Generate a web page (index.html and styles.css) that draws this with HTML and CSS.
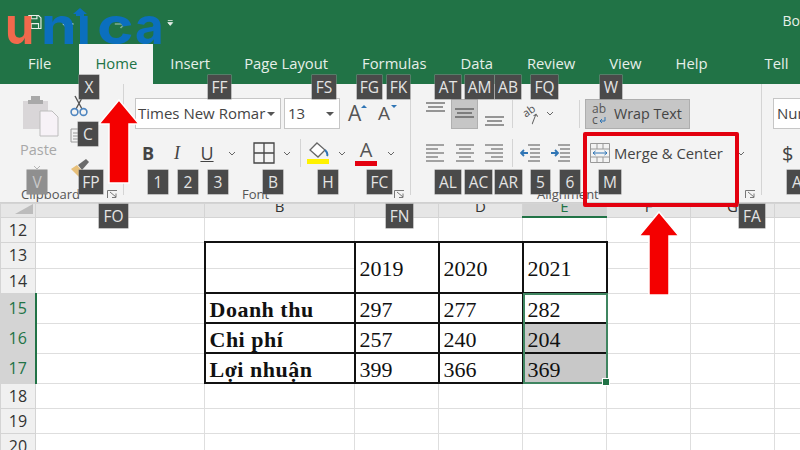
FILE: index.html
```html
<!DOCTYPE html>
<html lang="en">
<head>
<meta charset="utf-8">
<title>Excel ribbon</title>
<link rel="stylesheet" href="styles.css">
</head>
<body>
<div class="app">
  <header class="titlebar">
    <div class="qat">
      <svg class="qat-save" width="17" height="18" viewBox="0 0 17 18"><path d="M1 1h12l3 3v13H1z M4 17v-6h9v6 M4 1v4h7V1" fill="none" stroke="#e8efe9" stroke-width="1.4"/></svg>
      <svg class="qat-undo" width="15" height="12" viewBox="0 0 15 12"><path d="M14 6H3 M7 1L2 6l5 5" fill="none" stroke="#fff" stroke-width="2"/></svg>
      <svg class="qat-redo" width="15" height="12" viewBox="0 0 15 12"><path d="M1 6h11 M8 1l5 5-5 5" fill="none" stroke="#7fae93" stroke-width="2"/></svg>
      <svg class="qat-more" width="8" height="8" viewBox="0 0 8 8"><path d="M1 1h6 M1 3.5h6L4 7z" fill="#e8efe9" stroke="#e8efe9"/></svg>
      <span class="doc-name">Bo</span>
    </div>
    <nav class="tabs">
      <span class="tab tab-file">File</span>
      <span class="tab tab-home">Home</span>
      <span class="tab">Insert</span>
      <span class="tab">Page Layout</span>
      <span class="tab">Formulas</span>
      <span class="tab">Data</span>
      <span class="tab">Review</span>
      <span class="tab">View</span>
      <span class="tab">Help</span>
      <svg class="bulb" width="16" height="22" viewBox="0 0 16 22"><path d="M5 15c0-3-4-4-4-8a7 7 0 0 1 14 0c0 4-4 5-4 8z M5 18h6 M6 21h4" fill="none" stroke="#eef4f0" stroke-width="1.4"/></svg>
      <span class="tab tab-tell">Tell</span>
    </nav>
  </header>

  <section class="ribbon">
    <div class="group group-clip">
      <div class="clip-body">
        <div class="paste">
          <svg width="37" height="42" viewBox="0 0 37 42"><path d="M1 6h25v28H1z" fill="#d9d6d8"/><path d="M9 5V1h9v4h3v4H6V5z" fill="#a9a9a9"/><path d="M18 16h12l6 6v19H18z" fill="#f7f2f7" stroke="#bdbdbd"/></svg>
          <span class="paste-label">Paste</span>
          <svg class="chev-paste" width="8" height="5" viewBox="0 0 8 5"><path d="M1 1l3 3 3-3" fill="none" stroke="#b5b5b5"/></svg>
        </div>
        <div class="clip-tools">
          <svg width="18" height="22" viewBox="0 0 18 22"><path d="M5 1l7 13 M13 1L6 14" stroke="#555" stroke-width="1.4" fill="none"/><circle cx="4.5" cy="17" r="3.4" fill="none" stroke="#4f86c0" stroke-width="1.6"/><circle cx="13.5" cy="17" r="3.4" fill="none" stroke="#4f86c0" stroke-width="1.6"/></svg>
          <svg class="tool-copy" width="18" height="15" viewBox="0 0 18 15"><path d="M1 1h7l2 2v11H1z M3 5h5 M3 8h5 M3 11h5" fill="none" stroke="#9a9a9a"/></svg>
          <svg class="tool-brush" width="20" height="20" viewBox="0 0 20 20"><path d="M1 11l6-4 6 7-4 5z" fill="#e8c07a"/><path d="M8 7l8-6 3 3-7 8z" fill="#6b6b6b"/></svg>
        </div>
      </div>
      <div class="group-label label-clip">Clipboard</div>
      <svg class="launcher" width="11" height="9" viewBox="0 0 11 9"><path d="M.5 8V.5H10 M3 2l6 5 M9 3.5V7.500H5" fill="none" stroke="#777"/></svg>
    </div>

    <div class="group group-font">
      <div class="row row-top">
        <div class="select select-font">Times New Romar<i class="caret"></i></div>
        <div class="select select-size">13<i class="caret"></i></div>
        <span class="grow">A<i class="up"></i></span>
        <span class="shrink">A<i class="down"></i></span>
      </div>
      <div class="row row-bottom">
        <b class="fmt fmt-b">B</b>
        <i class="fmt fmt-i">I</i>
        <u class="fmt fmt-u">U</u>
        <svg class="chev ch-u" width="8" height="5" viewBox="0 0 8 5"><path d="M1 1l3 3 3-3" fill="none" stroke="#666"/></svg>
        <svg class="borders" width="22" height="22" viewBox="0 0 22 22"><path d="M1 1h20v20H1z M11 1v20 M1 11h20" fill="none" stroke="#444" stroke-width="1.300"/></svg>
        <svg class="chev ch-b" width="8" height="5" viewBox="0 0 8 5"><path d="M1 1l3 3 3-3" fill="none" stroke="#666"/></svg>
        <span class="vsep s-font"></span>
        <span class="fill">
          <svg width="22" height="16" viewBox="0 0 22 16"><path d="M10 1l8 7-7 7-8-7z" fill="#fff" stroke="#666" stroke-width="1.300"/><path d="M18 8c2 2 3 4 2 6" fill="none" stroke="#2f75b5" stroke-width="2"/></svg>
          <i class="swatch swatch-yellow"></i>
        </span>
        <svg class="chev ch-f" width="8" height="5" viewBox="0 0 8 5"><path d="M1 1l3 3 3-3" fill="none" stroke="#666"/></svg>
        <span class="color-a">A<i class="swatch swatch-red"></i></span>
        <svg class="chev ch-a" width="8" height="5" viewBox="0 0 8 5"><path d="M1 1l3 3 3-3" fill="none" stroke="#666"/></svg>
      </div>
      <div class="group-label label-font">Font</div>
      <svg class="launcher" width="11" height="9" viewBox="0 0 11 9"><path d="M.5 8V.5H10 M3 2l6 5 M9 3.5V7.500H5" fill="none" stroke="#777"/></svg>
    </div>

    <div class="group group-align">
      <div class="row row-top">
        <span class="al-btn al-first"><svg width="19" height="11" viewBox="0 0 19 11"><path d="M0 1h19 M2 5h15 M0 9h19" stroke="#777" stroke-width="1.300"/></svg></span>
        <span class="al-btn al-active"><svg width="19" height="11" viewBox="0 0 19 11"><path d="M0 1h19 M2 5h15 M0 9h19" stroke="#666" stroke-width="1.300"/></svg></span>
        <span class="al-btn al-low"><svg width="19" height="11" viewBox="0 0 19 11"><path d="M0 1h19 M2 5h15 M0 9h19" stroke="#777" stroke-width="1.300"/></svg></span>
        <span class="vsep s-a1"></span>
        <span class="orient">ab<svg class="orient-line" width="10" height="8" viewBox="0 0 10 8"><path d="M0 7L9 1 M6 1h3v3" fill="none" stroke="#666"/></svg></span>
        <svg class="chev ch-o" width="8" height="5" viewBox="0 0 8 5"><path d="M1 1l3 3 3-3" fill="none" stroke="#666"/></svg>
        <span class="vsep s-a2"></span>
        <div class="wrap-btn">
          <span class="wrap-ico">ab<br>c<svg width="8" height="7" viewBox="0 0 8 7"><path d="M7 0v4H2 M4 2L2 4l2 2" fill="none" stroke="#2f75b5"/></svg></span>
          <span class="wrap-text">Wrap Text</span>
        </div>
      </div>
      <div class="row row-bottom">
        <svg class="para p-first" width="18" height="20" viewBox="0 0 18 20"><path d="M0 2h18 M0 6h12 M0 10h18 M0 14h12 M0 18h18" stroke="#888" stroke-width="1.300"/></svg>
        <svg class="para p-gap" width="18" height="20" viewBox="0 0 18 20"><path d="M0 2h18 M3 6h12 M0 10h18 M3 14h12 M0 18h18" stroke="#888" stroke-width="1.300"/></svg>
        <svg class="para p-gap2" width="18" height="20" viewBox="0 0 18 20"><path d="M0 2h18 M6 6h12 M0 10h18 M6 14h12 M0 18h18" stroke="#888" stroke-width="1.300"/></svg>
        <span class="vsep s-a3"></span>
        <svg class="indent" width="20" height="20" viewBox="0 0 20 20"><path d="M8 2h12 M10 6h10 M10 10h10 M10 14h10 M8 18h12" stroke="#888" stroke-width="1.300"/><path d="M8 10H1 M4 7l-3 3 3 3" fill="none" stroke="#2f75b5" stroke-width="1.800"/></svg>
        <svg class="indent i-gap" width="20" height="20" viewBox="0 0 20 20"><path d="M8 2h12 M10 6h10 M10 10h10 M10 14h10 M8 18h12" stroke="#888" stroke-width="1.300"/><path d="M1 10h7 M5 7l3 3-3 3" fill="none" stroke="#2f75b5" stroke-width="1.800"/></svg>
        <svg class="merge-ico" width="20" height="20" viewBox="0 0 20 20"><path d="M.5.5h19v19H.5z M.5 6h19 M.5 14h19 M7 .5V6 M13 .5V6 M7 14v5.500 M13 14v5.500" fill="none" stroke="#999"/><path d="M3 10h14 M5.500 8L3 10l2.500 2 M14.500 8L17 10l-2.500 2" fill="none" stroke="#2f75b5"/></svg>
        <span class="merge-text">Merge &amp; Center</span>
        <svg class="chev ch-m" width="8" height="5" viewBox="0 0 8 5"><path d="M1 1l3 3 3-3" fill="none" stroke="#666"/></svg>
      </div>
      <div class="group-label label-align">Alignment</div>
      <svg class="launcher" width="11" height="9" viewBox="0 0 11 9"><path d="M.5 8V.5H10 M3 2l6 5 M9 3.5V7.500H5" fill="none" stroke="#777"/></svg>
    </div>

    <div class="group group-num">
      <div class="row row-top"><div class="select select-num">Num</div></div>
      <div class="row row-bottom"><span class="dollar">$</span></div>
    </div>
  </section>

  <main class="sheet">
    <table class="grid">
      <colgroup>
        <col class="col-head"><col class="col-a"><col class="col-b"><col class="col-n"><col class="col-n"><col class="col-n"><col class="col-n"><col class="col-n"><col class="col-n">
      </colgroup>
      <thead>
        <tr class="r-cols">
          <th class="corner"><svg width="18" height="10" viewBox="0 0 18 10"><path d="M18 0v10H0z" fill="#bcbcbc"/></svg></th>
          <th><div class="col-letter">A</div></th><th><div class="col-letter">B</div></th><th><div class="col-letter">C</div></th><th><div class="col-letter">D</div></th>
          <th class="col-sel"><div class="col-letter">E</div></th><th><div class="col-letter">F</div></th><th><div class="col-letter">G</div></th><th><div class="col-letter">H</div></th>
        </tr>
      </thead>
      <tbody>
        <tr class="r-top"><th>12</th><td></td><td></td><td></td><td></td><td></td><td></td><td></td><td></td></tr>
        <tr class="r-26"><th>13</th><td></td><td class="box box-nobottom"></td><td class="box" rowspan="2">2019</td><td class="box" rowspan="2">2020</td><td class="box" rowspan="2">2021</td><td></td><td></td><td></td></tr>
        <tr class="r-25"><th>14</th><td></td><td class="box box-notop"></td><td></td><td></td><td></td></tr>
        <tr class="r-30"><th class="row-sel">15</th><td></td><td class="box label">Doanh thu</td><td class="box">297</td><td class="box">277</td><td class="box">282</td><td></td><td></td><td></td></tr>
        <tr class="r-30"><th class="row-sel">16</th><td></td><td class="box label">Chi phí</td><td class="box">257</td><td class="box">240</td><td class="box shaded">204</td><td></td><td></td><td></td></tr>
        <tr class="r-30"><th class="row-sel">17</th><td></td><td class="box label">Lợi nhuận</td><td class="box">399</td><td class="box">366</td><td class="box shaded">369</td><td></td><td></td><td></td></tr>
        <tr class="r-25"><th>18</th><td></td><td></td><td></td><td></td><td></td><td></td><td></td><td></td></tr>
        <tr class="r-25"><th>19</th><td></td><td></td><td></td><td></td><td></td><td></td><td></td><td></td></tr>
        <tr class="r-25"><th>20</th><td></td><td></td><td></td><td></td><td></td><td></td><td></td><td></td></tr>
      </tbody>
    </table>
    <div class="selection"><i class="handle"></i></div>
  </main>

  <div class="logo"><span class="logo-u">u</span><span class="logo-blue l-n">n</span><span class="logo-blue l-i">ı</span><span class="logo-blue l-c">c</span><span class="logo-blue l-a">a</span>
    <svg class="logo-hat" width="14" height="8" viewBox="0 0 14 8"><path d="M7 0l7 6h-3v2H3V6H0z" fill="#0b6fbe"/></svg>
  </div>

  <div class="redbox"></div>
  <svg class="arrow arrow-left" width="44" height="88" viewBox="0 0 44 88"><path d="M22 2L42 26H32V85H12V26H2z" fill="#f40000" stroke="#fff" stroke-width="1.500"/></svg>
  <svg class="arrow arrow-right" width="44" height="88" viewBox="0 0 44 88"><path d="M22 2L42 26H32V85H12V26H2z" fill="#f40000" stroke="#fff" stroke-width="1.500"/></svg>

  <span class="kt kt-x">X</span><span class="kt kt-ff">FF</span><span class="kt kt-fs">FS</span><span class="kt kt-fg">FG</span><span class="kt kt-fk">FK</span>
  <span class="kt kt-at">AT</span><span class="kt kt-am">AM</span><span class="kt kt-ab">AB</span><span class="kt kt-fq">FQ</span><span class="kt kt-w">W</span>
  <span class="kt kt-c">C</span><span class="kt kt-v">V</span><span class="kt kt-fp">FP</span><span class="kt kt-1">1</span><span class="kt kt-2">2</span><span class="kt kt-3">3</span>
  <span class="kt kt-b">B</span><span class="kt kt-h">H</span><span class="kt kt-fc">FC</span><span class="kt kt-al">AL</span><span class="kt kt-ac">AC</span><span class="kt kt-ar">AR</span>
  <span class="kt kt-5">5</span><span class="kt kt-6">6</span><span class="kt kt-m">M</span><span class="kt kt-a">A</span>
  <span class="kt kt-fo">FO</span><span class="kt kt-fn">FN</span><span class="kt kt-fa">FA</span>
</div>
</body>
</html>
```
FILE: styles.css
```css
* { box-sizing: border-box; }
html, body { margin: 0; height: 100%; overflow: hidden; background: #fff; }
body { font-family: "Open Sans", "Noto Sans", sans-serif; color: #444; }
.app { position: relative; width: 800px; height: 450px; overflow: hidden; }

/* title bar and tabs */
.titlebar { height: 84px; background: #217346; display: flex; flex-direction: column; }
.qat { height: 44px; display: flex; align-items: flex-start; padding: 13px 0 0 28px; }
.qat-undo { margin: 5px 0 0 20px; }
.qat-redo { margin: 5px 0 0 40px; }
.qat-more { margin: 6px 0 0 41px; }
.doc-name { margin: -1px 0 0 609px; color: #e8efe9; font-size: 14px; line-height: 18px; white-space: nowrap; }
.tabs { height: 40px; display: flex; align-items: stretch; padding-left: 11px; }
.tab { padding: 0 17px; font-size: 14.800px; line-height: 38px; color: #e6efe9; white-space: nowrap; }
.tab-home { margin-left: 11px; padding: 0 16px; background: #f3f3f3; color: #217346; }
.bulb { margin: 9px 0 0 22px; }
.tab-tell { padding-left: 18px; }

/* ribbon */
.ribbon { height: 119px; background: #f3f3f3; display: flex; border-bottom: 1px solid #d0d0d0; }
.group { position: relative; display: flex; flex-direction: column; flex: none; }
.group-clip { width: 124px; border-right: 1px solid #d4d4d4; margin-bottom: 8px; height: 111px; }
.group-font { width: 287px; padding: 14px 0 0 11px; border-right: 1px solid #d4d4d4; margin-bottom: 8px; height: 111px; }
.group-align { width: 351px; padding: 14px 0 0 15px; border-right: 1px solid #d4d4d4; margin-bottom: 8px; height: 111px; }
.group-num { flex: 1; padding: 14px 0 0 11px; }
.row { display: flex; align-items: center; flex: none; }
.row-top { height: 31px; }
.row-bottom { height: 32px; margin-top: 8px; }
.group-label { position: absolute; top: 101px; font-size: 13px; line-height: 18px; color: #555; }
.label-clip { left: 21px; }
.label-font { left: 118px; }
.label-align { left: 126px; }
.launcher { position: absolute; right: 5px; top: 106px; }

/* clipboard */
.clip-body { display: flex; padding: 11px 0 0 22px; }
.paste { width: 48px; display: flex; flex-direction: column; align-items: flex-start; }
.paste-label { margin: 3px 0 0 -2px; font-size: 14.500px; line-height: 20px; color: #a8a8a8; }
.chev-paste { margin: 5px 0 0 11px; }
.clip-tools { display: flex; flex-direction: column; align-items: flex-start; }
.tool-copy { margin-top: 11px; }
.tool-brush { margin-top: 15px; }

/* font group */
.select { height: 31px; background: #fff; border: 1px solid #c6c6c6; font-size: 15px; line-height: 29px; color: #444; display: flex; align-items: center; white-space: nowrap; overflow: hidden; position: relative; }
.select-font { width: 146px; padding-left: 2px; }
.select-size { width: 56px; margin-left: 3px; padding-left: 3px; }
.caret { position: absolute; right: 5px; top: 13px; border: 4px solid transparent; border-top-color: #555; border-bottom: 0; }
.grow, .shrink { position: relative; font-size: 19px; line-height: 31px; color: #555; }
.grow { margin-left: 8px; font-size: 21px; width: 30px; }
.shrink { width: 20px; }
.up, .down { position: absolute; border: 3px solid transparent; }
.up { left: 13px; top: 7px; border-bottom-color: #2f75b5; border-top: 0; }
.down { left: 13px; top: 7px; border-top-color: #2f75b5; border-bottom: 0; }
.fmt { width: 14px; text-align: center; font-size: 18px; line-height: 24px; color: #444; flex: none; }
.fmt-b { margin-left: 6px; font-weight: 700; }
.fmt-i { margin-left: 15px; font-family: "Liberation Serif", serif; }
.fmt-u { margin-left: 16px; }
.chev { flex: none; }
.ch-u { margin-left: 14px; }
.borders { margin-left: 17px; flex: none; }
.ch-b { margin-left: 8px; }
.vsep { flex: none; width: 1px; height: 28px; background: #d4d4d4; }
.s-font { margin-left: 9px; }
.fill { flex: none; margin-left: 6px; width: 24px; display: flex; flex-direction: column; }
.swatch { display: block; height: 5px; }
.swatch-yellow { background: #fff200; margin-top: 1px; width: 22px; }
.ch-f { margin-left: 7px; }
.color-a { flex: none; margin-left: 9px; width: 22px; font-size: 20px; line-height: 18px; color: #555; display: flex; flex-direction: column; align-items: center; }
.swatch-red { background: #e4000f; width: 22px; margin-top: 2px; }
.ch-a { margin-left: 10px; }

/* alignment */
.al-btn { flex: none; width: 27px; height: 30px; display: flex; align-items: center; justify-content: center; }
.al-first { margin-left: -4px; align-items: flex-start; padding-top: 3px; }
.al-active { margin-left: 2px; background: #c6c6c6; border: 1px solid #b0b0b0; }
.al-low { margin-left: 3px; align-items: flex-end; padding-bottom: 2px; }
.s-a1 { margin-left: 4px; }
.orient { flex: none; position: relative; width: 22px; margin-left: 7px; font-size: 11px; line-height: 12px; color: #555; transform: rotate(-35deg); text-align: center; }
.orient-line { display: block; margin: 0 auto; }
.ch-o { margin-left: 4px; }
.s-a2 { margin-left: 25px; }
.wrap-btn { flex: none; margin-left: 5px; width: 105px; height: 30px; background: #c6c6c6; border: 1px solid #aeaeae; display: flex; align-items: center; padding-left: 6px; color: #444; white-space: nowrap; }
.wrap-ico { width: 22px; font-size: 12px; line-height: 11px; color: #555; }
.wrap-text { font-size: 14.300px; }
.para { flex: none; }
.p-first { margin-left: 0; }
.p-gap { margin-left: 12px; }
.p-gap2 { margin-left: 11px; }
.s-a3 { margin-left: 9px; }
.indent { flex: none; margin-left: 7px; }
.i-gap { margin-left: 10px; }
.merge-ico { flex: none; margin-left: 20px; }
.merge-text { flex: none; margin-left: 4px; font-size: 14.800px; color: #444; white-space: nowrap; }
.ch-m { margin-left: 14px; }

/* number */
.select-num { width: 60px; padding-left: 3px; }
.dollar { margin-left: 9px; font-size: 20px; color: #444; }

/* sheet */
.sheet { position: relative; height: 247px; overflow: hidden; background: #fff; }
.grid { table-layout: fixed; width: 834px; border-collapse: collapse; font-family: "Liberation Serif", serif; font-size: 22px; color: #111; }
.col-head { width: 35px; }
.col-a { width: 169px; }
.col-b { width: 150px; }
.col-n { width: 84px; }
.r-cols { height: 13px; }
.r-top { height: 25px; }
.r-25 { height: 25px; }
.r-26 { height: 26px; }
.r-30 { height: 30px; }
th { padding: 0; background: #e6e6e6; border: 1px solid #d4d4d4; font: 400 16px/18px "Open Sans", sans-serif; color: #333; overflow: hidden; }
.r-cols th { height: 13px; }
.corner { text-align: right; vertical-align: top; padding-right: 2px; }
.corner svg { display: block; margin-left: auto; }
.col-letter { height: 12px; line-height: 5px; overflow: hidden; font-size: 15px; color: #333; }
.col-sel { background: #d2d2d2; border-bottom: 2px solid #217346; color: #217346; }
.col-sel .col-letter { color: #217346; }
.row-sel { background: #d4d4d4; border-right: 2px solid #217346; color: #217346; }
tbody th { background: #f0f0f0; }
tbody .row-sel { background: #d4d4d4; }
td { padding: 3px 0 0 4px; border: 1px solid #dedede; line-height: 24px; white-space: nowrap; overflow: hidden; }
td.box { border: 2px solid #111; }
td.box-nobottom { border-bottom: 1px solid #dedede; }
td.box-notop { border-top: 1px solid #dedede; }
.label { font-weight: 700; letter-spacing: .5px; }
.shaded { background: #c8c8c8; }
.selection { position: absolute; left: 523px; top: 90px; width: 85px; height: 91px; border: 2px solid #3f8560; pointer-events: none; }
.handle { position: absolute; right: -4px; bottom: -4px; width: 6px; height: 6px; background: #217346; border: 1px solid #fff; box-sizing: content-box; }

/* overlays */
.logo { position: absolute; left: 5px; top: -4px; font-family: Inter, sans-serif; font-weight: 700; font-size: 52px; line-height: 60px; white-space: nowrap; }
.logo-u { display: inline-block; color: #f2694c; transform: scaleX(.9); transform-origin: 0 50%; }
.logo-blue { display: inline-block; color: #0b6fbe; transform-origin: 0 50%; }
.l-n { margin-left: 4px; transform: scaleX(1.1); }
.l-i { margin-left: 3px; }
.l-c { margin-left: 6px; transform: scaleX(1.2); }
.l-a { margin-left: 8px; transform: scaleX(.95); }
.logo-hat { position: absolute; left: 68px; top: 12px; }
.redbox { position: absolute; left: 583px; top: 132px; width: 156px; height: 75px; border: 4px solid #e3000f; border-radius: 2px; }
.arrow { position: absolute; }
.arrow-left { left: 97px; top: 98px; }
.arrow-right { left: 637px; top: 210px; }

.kt { position: absolute; height: 24px; display: flex; align-items: center; justify-content: center; background: #4a4a4a; color: #e4e4e4; font-size: 15.500px; line-height: 24px; box-shadow: 0 0 0 .5px #8a8a8a; }
.kt-x { left: 79px; top: 75px; width: 20px; }
.kt-ff { left: 208px; top: 75px; width: 23px; }
.kt-fs { left: 312px; top: 75px; width: 24px; }
.kt-fg { left: 357px; top: 75px; width: 25px; }
.kt-fk { left: 387px; top: 75px; width: 23px; }
.kt-at { left: 435px; top: 75px; width: 26px; }
.kt-am { left: 465px; top: 75px; width: 29px; }
.kt-ab { left: 495px; top: 75px; width: 26px; }
.kt-fq { left: 531px; top: 75px; width: 27px; }
.kt-w { left: 600px; top: 75px; width: 22px; }
.kt-c { left: 78px; top: 122px; width: 20px; }
.kt-v { left: 27px; top: 170px; width: 20px; background: #8f8f8f; color: #c9c9c9; }
.kt-fp { left: 79px; top: 170px; width: 24px; }
.kt-1 { left: 148px; top: 170px; width: 20px; }
.kt-2 { left: 178px; top: 170px; width: 20px; }
.kt-3 { left: 208px; top: 170px; width: 20px; }
.kt-b { left: 263px; top: 170px; width: 20px; }
.kt-h { left: 318px; top: 170px; width: 20px; }
.kt-fc { left: 367px; top: 170px; width: 25px; }
.kt-al { left: 435px; top: 170px; width: 26px; }
.kt-ac { left: 465px; top: 170px; width: 27px; }
.kt-ar { left: 495px; top: 170px; width: 27px; }
.kt-5 { left: 531px; top: 170px; width: 19px; }
.kt-6 { left: 560px; top: 170px; width: 20px; }
.kt-m { left: 599px; top: 170px; width: 22px; }
.kt-a { left: 787px; top: 170px; width: 20px; }
.kt-fo { left: 99px; top: 204px; width: 29px; }
.kt-fn { left: 386px; top: 204px; width: 27px; }
.kt-fa { left: 739px; top: 204px; width: 26px; }
```
